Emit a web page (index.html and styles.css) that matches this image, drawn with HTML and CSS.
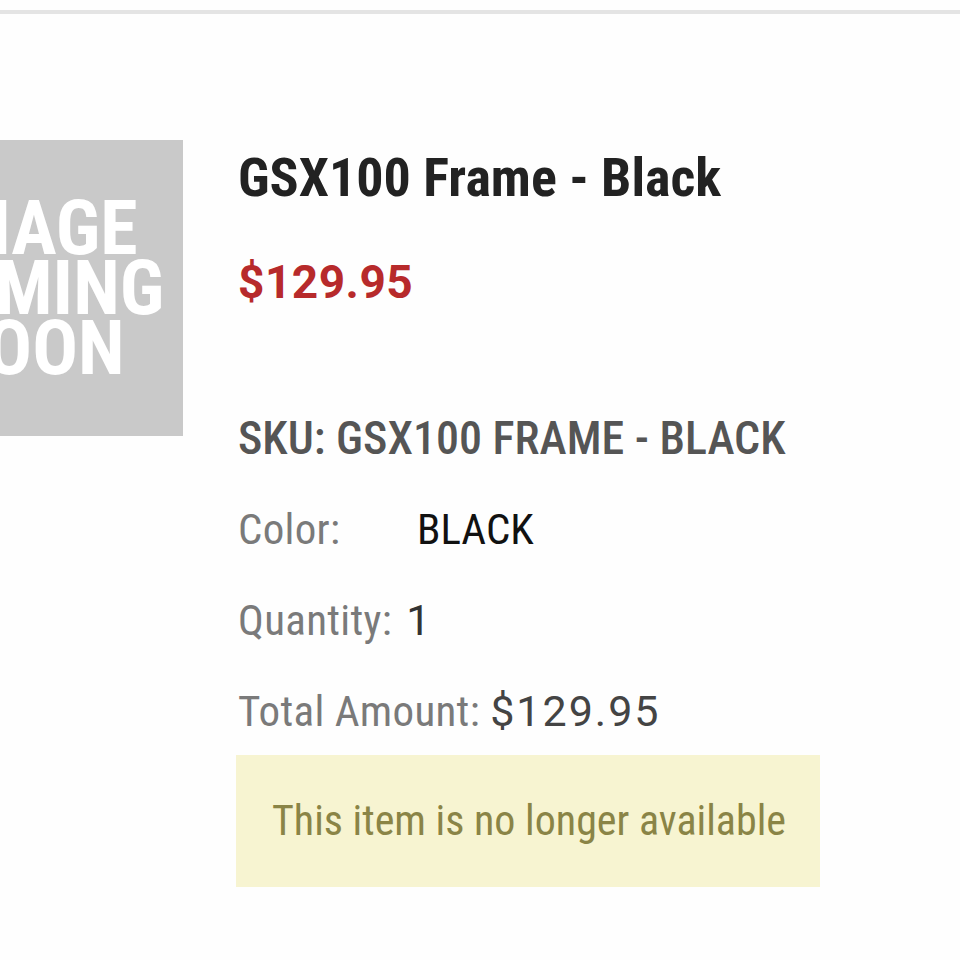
FILE: index.html
```html
<!DOCTYPE html>
<html lang="en">
<head>
<meta charset="utf-8">
<title>GSX100 Frame - Black</title>
<link rel="stylesheet" href="styles.css">
</head>
<body>
<div class="topbar"></div>
<main class="item">
  <div class="thumb">
    <div class="thumb-text">IMAGE<br>COMING<br>SOON</div>
  </div>
  <div class="details">
    <h1 class="title">GSX100 Frame - Black</h1>
    <div class="price">$129.95</div>
    <div class="sku">SKU: GSX100 FRAME - BLACK</div>
    <div class="row"><span class="label label-color">Color:</span><span class="value value-black">BLACK</span></div>
    <div class="row"><span class="label">Quantity:</span> <span class="value value-num value-qty">1</span></div>
    <div class="row"><span class="label">Total Amount:</span> <span class="value value-num value-total">$129.95</span></div>
    <div class="notice">This item is no longer available</div>
  </div>
</main>
</body>
</html>
```
FILE: styles.css
```css
html, body {
  margin: 0;
  padding: 0;
  background: #fefefe;
}
body {
  font-family: "Roboto Condensed", "Roboto", sans-serif;
  overflow: hidden;
}
.topbar {
  height: 10px;
  border-bottom: 4px solid #e4e4e4;
}
.item {
  display: flex;
  align-items: flex-start;
  padding-top: 126px;
}
.thumb {
  flex: none;
  width: 296px;
  height: 296px;
  margin-left: -113px;
  background: #c9c9c9;
  display: flex;
  align-items: center;
  justify-content: center;
}
.thumb-text {
  color: #fff;
  font-weight: 700;
  font-size: 76px;
  line-height: 60px;
  text-align: center;
}
.details {
  margin-left: 55px;
  padding-top: 5px;
  display: flex;
  flex-direction: column;
  align-items: flex-start;
  white-space: nowrap;
}
.title {
  margin: 0;
  font-size: 54px;
  font-weight: 700;
  line-height: 66px;
  color: #222;
}
.price {
  margin-top: 43px;
  font-family: "Roboto", sans-serif;
  font-size: 46px;
  font-weight: 700;
  line-height: 56px;
  letter-spacing: 0.5px;
  color: #b72a2b;
}
.sku {
  margin-top: 100px;
  font-size: 46px;
  font-weight: 500;
  line-height: 56px;
  color: #555;
}
.row {
  margin-top: 35px;
  font-size: 43px;
  line-height: 56px;
  letter-spacing: 0.3px;
}
.label { color: #7a7a7a; }
.label-color { display: inline-block; width: 179px; }
.value { color: #333; }
.value-black { color: #111; letter-spacing: 0; }
.value-num { font-family: "Roboto", sans-serif; font-weight: 400; letter-spacing: 2px; }
.value-qty { margin-left: 4px; }
.value-total { color: #444; }
.notice {
  margin-top: 16px;
  margin-left: -2px;
  width: 584px;
  box-sizing: border-box;
  padding: 38px 36px;
  background: #f7f4d1;
  color: #8a8446;
  font-size: 42px;
  line-height: 56px;
}
```
